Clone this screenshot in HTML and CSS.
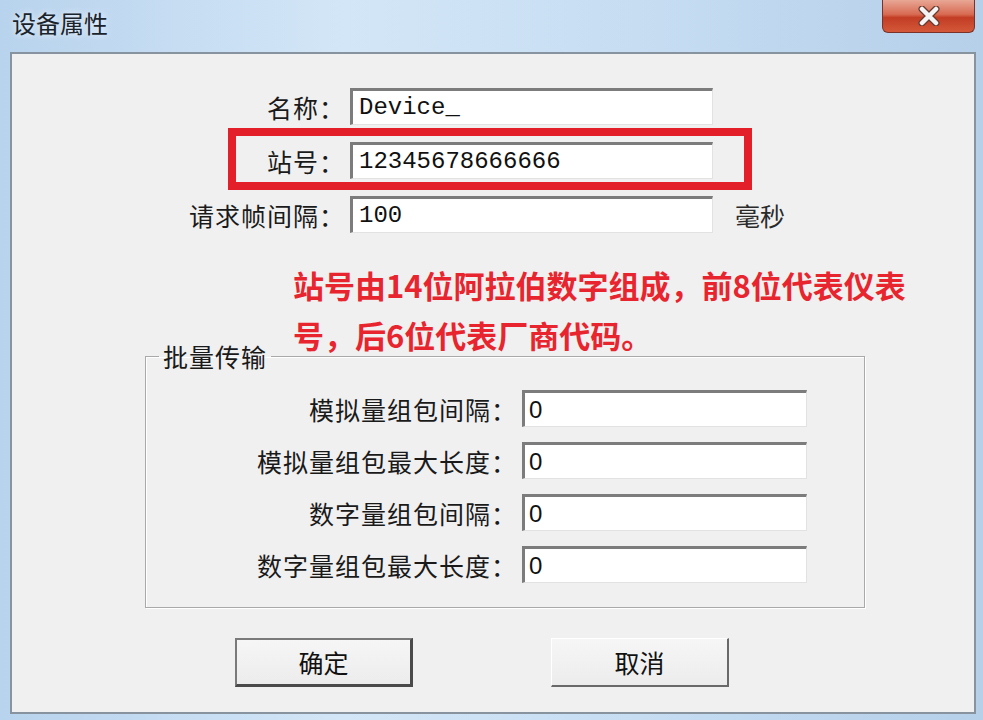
FILE: index.html
```html
<!DOCTYPE html>
<html>
<head>
    <title>设备属性</title>
    <meta name="viewport" content="width=device-width, initial-scale=1">
    <link rel="stylesheet" href="styles.css">
</head>
<body>
    <div class="window">
        <div class="titlebar">
            <span class="title">设备属性</span>
            <div class="close">
                <svg width="24" height="20" viewBox="0 0 24 20">
                    <path d="M5 3 L19 17 M19 3 L5 17" stroke="#6a3a30" stroke-width="7" stroke-linecap="round"/>
                    <path d="M5 3 L19 17 M19 3 L5 17" stroke="#f4f4f4" stroke-width="4.5" stroke-linecap="round"/>
                </svg>
            </div>
        </div>

        <div class="panel">
            <div class="form-top">
                <label class="label">名称：</label>
                <input type="text" class="input mono" value="Device_">
                <span></span>

                <label class="label">站号：</label>
                <input type="text" class="input mono" value="12345678666666">
                <span></span>

                <label class="label">请求帧间隔：</label>
                <input type="text" class="input mono" value="100">
                <span class="unit">毫秒</span>
            </div>

            <!-- annotation drawn over the screenshot -->
            <div class="highlight"></div>

            <p class="note">站号由14位阿拉伯数字组成，前8位代表仪表<br>号，后6位代表厂商代码。</p>

            <fieldset class="group">
                <legend>批量传输</legend>
                <div class="group-grid">
                    <label class="label">模拟量组包间隔：</label>
                    <input type="text" class="input sans" value="0">

                    <label class="label">模拟量组包最大长度：</label>
                    <input type="text" class="input sans" value="0">

                    <label class="label">数字量组包间隔：</label>
                    <input type="text" class="input sans" value="0">

                    <label class="label">数字量组包最大长度：</label>
                    <input type="text" class="input sans" value="0">
                </div>
            </fieldset>

            <div class="buttons">
                <button class="button default">确定</button>
                <button class="button">取消</button>
            </div>
        </div>
    </div>
</body>
</html>
```

FILE: styles.css
```css
body {
    margin: 0;
    font-family: "Noto Sans CJK SC", "Noto Sans", sans-serif;
    color: #1a1a1a;
}
.window {
    width: 983px;
    height: 720px;
    background: linear-gradient(to right, #b8d3ed 0%, #d3e6f7 35%, #c6ddf2 65%, #b6d0ea 100%);
    overflow: hidden;
}
.titlebar {
    height: 52px;
    display: flex;
    justify-content: space-between;
    align-items: flex-start;
}
.title {
    margin: 8px 0 0 12px;
    font-size: 24px;
    line-height: 30px;
    color: #1a242c;
    text-shadow: 0 0 6px rgba(255,255,255,0.9);
}
.close {
    width: 93px;
    height: 33px;
    margin-right: 8px;
    box-sizing: border-box;
    border: 1px solid #7a3328;
    border-top: none;
    border-radius: 0 0 6px 6px;
    background: linear-gradient(#e8a795 0%, #d76a52 45%, #c23d24 55%, #d4583a 100%);
    display: flex;
    justify-content: center;
    align-items: center;
}
.panel {
    position: relative;
    height: 662px;
    margin: 0 7px 0 10px;
    box-sizing: border-box;
    border: 2px solid #87939f;
    background: #f0f0f0;
}
.form-top {
    display: grid;
    grid-template-columns: 333px 363px auto;
    grid-auto-rows: 37px;
    column-gap: 5px;
    row-gap: 17px;
    padding-top: 34px;
    align-items: center;
}
.label {
    text-align: right;
    font-size: 25px;
    letter-spacing: 1px;
    white-space: nowrap;
    color: #1a1a1a;
}
.input {
    height: 37px;
    box-sizing: border-box;
    margin: 0;
    padding: 0 6px;
    border-top: 3px solid #7c7c7c;
    border-left: 3px solid #7c7c7c;
    border-right: 1px solid #e2e2e2;
    border-bottom: 1px solid #e2e2e2;
    background: #fff;
    color: #111;
    outline: none;
}
.mono {
    font-family: "Liberation Mono", monospace;
    font-size: 24px;
}
.sans {
    font-family: "Liberation Sans", sans-serif;
    font-size: 24px;
    padding-left: 4px;
}
.unit {
    margin-left: 17px;
    font-size: 25px;
    color: #2a2a2a;
}
.highlight {
    position: absolute;
    left: 216px;
    top: 74px;
    width: 524px;
    height: 62px;
    box-sizing: border-box;
    border: 8px solid #e3202a;
}
.note {
    margin: 27px 0 0 0;
    padding-left: 281px;
    font-size: 31px;
    font-weight: bold;
    line-height: 50px;
    color: #e8252e;
}
.group {
    width: 720px;
    box-sizing: border-box;
    margin: -18px 0 0 133px;
    padding: 20px 0 24px 0;
    border: 1px solid #a9a9a9;
    box-shadow: 1px 1px 0 #fff, inset 1px 1px 0 #fff;
}
.group legend {
    margin-left: 13px;
    padding: 0 4px;
    font-size: 25px;
    line-height: 28px;
    letter-spacing: 1px;
    color: #1a1a1a;
}
.group-grid {
    display: grid;
    grid-template-columns: 371px 285px;
    grid-auto-rows: 37px;
    column-gap: 5px;
    row-gap: 15px;
    align-items: center;
}
.buttons {
    display: flex;
    gap: 138px;
    margin-top: 30px;
    padding-left: 223px;
}
.button {
    width: 178px;
    height: 49px;
    box-sizing: border-box;
    font-family: "Noto Sans CJK SC", sans-serif;
    font-size: 25px;
    color: #111;
    background: linear-gradient(#f6f6f6, #ececec);
    border-top: 1px solid #ffffff;
    border-left: 1px solid #ffffff;
    border-right: 2px solid #696969;
    border-bottom: 2px solid #696969;
    padding: 0;
}
.button.default {
    border-top: 2px solid #7a7a7a;
    border-left: 2px solid #7a7a7a;
    border-right: 3px solid #4a4a4a;
    border-bottom: 3px solid #4a4a4a;
}
```
